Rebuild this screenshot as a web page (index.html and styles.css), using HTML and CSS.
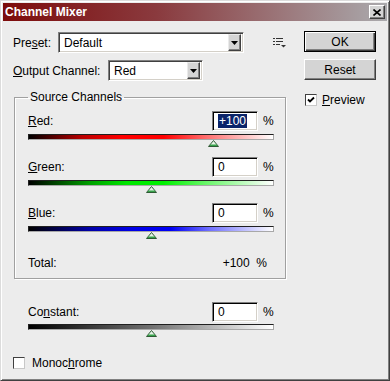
FILE: index.html
```html
<!DOCTYPE html>
<html lang="en">
<head>
  <meta charset="UTF-8" />
  <title>Channel Mixer</title>
  <link rel="stylesheet" href="styles.css">
</head>
<body>

  <div class="window">
    <div class="titlebar">
      <span class="title">Channel Mixer</span>
      <button class="close-btn">
        <svg width="8" height="7" viewBox="0 0 8 7"><path d="M0.5 0.5 L7.5 6.5 M7.5 0.5 L0.5 6.5" stroke="#000" stroke-width="1.6" fill="none"/></svg>
      </button>
    </div>

    <div class="dialog">
      <div class="main">
        <div class="field-row">
          <label class="preset-label">Pre<u>s</u>et:</label>
          <div class="select preset-select">
            <span class="select-text">Default</span>
            <span class="select-arrow"><svg width="7" height="4" viewBox="0 0 7 4"><polygon points="0,0 7,0 3.5,4" fill="#000"/></svg></span>
          </div>
          <!-- preset options menu -->
          <svg class="list-icon" width="14" height="10" viewBox="0 0 14 10">
            <rect x="0" y="0" width="2" height="1" fill="#333"/>
            <rect x="3" y="0" width="7" height="1" fill="#333"/>
            <rect x="0" y="3" width="2" height="1" fill="#333"/>
            <rect x="3" y="3" width="7" height="1" fill="#333"/>
            <rect x="0" y="6" width="2" height="1" fill="#333"/>
            <rect x="3" y="6" width="4" height="1" fill="#333"/>
            <polygon points="8,7 13,7 10.5,9.5" fill="#333"/>
          </svg>
        </div>

        <div class="field-row output-row">
          <label class="output-label"><u>O</u>utput Channel:</label>
          <div class="select output-select">
            <span class="select-text">Red</span>
            <span class="select-arrow"><svg width="7" height="4" viewBox="0 0 7 4"><polygon points="0,0 7,0 3.5,4" fill="#000"/></svg></span>
          </div>
        </div>

        <fieldset class="group">
          <legend>Source Channels</legend>

          <div class="slider">
            <div class="slider-head">
              <label class="slider-label"><u>R</u>ed:</label>
              <div class="num-input"><span class="selected">+100</span></div>
              <span class="pct">%</span>
            </div>
            <div class="track red"></div>
            <div class="thumb-lane">
              <svg class="thumb" style="left:75%" width="11" height="7" viewBox="0 0 11 7"><polygon points="5.5,0.5 10.5,6.5 0.5,6.5" fill="#e6f3e6" stroke="#2e5a34"/><rect x="2" y="4.5" width="7" height="1.5" fill="#36a24a"/></svg>
            </div>
          </div>

          <div class="slider">
            <div class="slider-head">
              <label class="slider-label"><u>G</u>reen:</label>
              <div class="num-input">0</div>
              <span class="pct">%</span>
            </div>
            <div class="track green"></div>
            <div class="thumb-lane">
              <svg class="thumb" style="left:50%" width="11" height="7" viewBox="0 0 11 7"><polygon points="5.5,0.5 10.5,6.5 0.5,6.5" fill="#e6f3e6" stroke="#2e5a34"/><rect x="2" y="4.5" width="7" height="1.5" fill="#36a24a"/></svg>
            </div>
          </div>

          <div class="slider">
            <div class="slider-head">
              <label class="slider-label"><u>B</u>lue:</label>
              <div class="num-input">0</div>
              <span class="pct">%</span>
            </div>
            <div class="track blue"></div>
            <div class="thumb-lane">
              <svg class="thumb" style="left:50%" width="11" height="7" viewBox="0 0 11 7"><polygon points="5.5,0.5 10.5,6.5 0.5,6.5" fill="#e6f3e6" stroke="#2e5a34"/><rect x="2" y="4.5" width="7" height="1.5" fill="#36a24a"/></svg>
            </div>
          </div>

          <div class="total-row">
            <span>Total:</span>
            <span class="total-value">+100&nbsp;&nbsp;%</span>
          </div>
        </fieldset>

        <div class="slider constant">
          <div class="slider-head">
            <label class="slider-label">Co<u>n</u>stant:</label>
            <div class="num-input">0</div>
            <span class="pct">%</span>
          </div>
          <div class="track gray"></div>
          <div class="thumb-lane">
            <svg class="thumb" style="left:50%" width="11" height="7" viewBox="0 0 11 7"><polygon points="5.5,0.5 10.5,6.5 0.5,6.5" fill="#e6f3e6" stroke="#2e5a34"/><rect x="2" y="4.5" width="7" height="1.5" fill="#36a24a"/></svg>
          </div>
        </div>

        <label class="check-row mono">
          <span class="checkbox"></span>
          <span>Monoc<u>h</u>rome</span>
        </label>
      </div>

      <div class="side">
        <button class="btn ok-btn">OK</button>
        <button class="btn reset-btn">Reset</button>
        <label class="check-row preview">
          <span class="checkbox">
            <svg width="8" height="8" viewBox="0 0 8 8"><path d="M1 3.5 L3 5.5 L7 1.5" stroke="#000" stroke-width="1.8" fill="none"/></svg>
          </span>
          <span><u>P</u>review</span>
        </label>
      </div>
    </div>
  </div>

</body>
</html>
```

FILE: styles.css
```css
body {
  margin: 0;
  font-family: "Liberation Sans", Arial, sans-serif;
  font-size: 12px;
  color: #000;
}

.window {
  width: 390px;
  height: 381px;
  box-sizing: border-box;
  border: 1px solid;
  border-color: #dcdcdc #404040 #404040 #dcdcdc;
  padding: 2px;
  box-shadow: inset 1px 1px #fff, inset -1px -1px #808080;
  background: #ececec;
  display: flex;
  flex-direction: column;
}

.titlebar {
  height: 18px;
  flex-shrink: 0;
  display: flex;
  align-items: center;
  justify-content: space-between;
  padding: 0 2px;
  background: linear-gradient(to right, #7d0c0c, #8a3a3e 40%, #aaaaad);
  color: #fff;
  font-weight: bold;
}

.close-btn {
  width: 16px;
  height: 14px;
  padding: 0;
  display: flex;
  align-items: center;
  justify-content: center;
  background: #d4d4d4;
  border: 1px solid;
  border-color: #fff #404040 #404040 #fff;
  box-shadow: inset -1px -1px #808080;
}

.dialog {
  flex: 1;
  display: flex;
  padding-top: 11px;
}

.main {
  width: 287px;
  padding-left: 10px;
  box-sizing: border-box;
}

.side {
  width: 72px;
  margin-left: 14px;
  margin-top: -1px;
  display: flex;
  flex-direction: column;
}

.field-row {
  display: flex;
  align-items: center;
  height: 21px;
}

.output-row {
  margin-top: 7px;
}

.preset-label {
  width: 45px;
}

.output-label {
  width: 95px;
}

.select {
  box-sizing: border-box;
  height: 21px;
  display: flex;
  align-items: center;
  padding: 2px;
  background: #fff;
  border: 1px solid;
  border-color: #808080 #fff #fff #808080;
  box-shadow: inset 1px 1px #404040, inset -1px -1px #d4d0c8;
}

.preset-select {
  width: 186px;
}

.output-select {
  width: 95px;
}

.select-text {
  flex: 1;
  padding-left: 3px;
}

.select-arrow {
  width: 13px;
  height: 17px;
  box-sizing: border-box;
  display: flex;
  align-items: center;
  justify-content: center;
  background: #d4d4d4;
  border: 1px solid;
  border-color: #eaeaea #404040 #404040 #eaeaea;
  box-shadow: inset -1px -1px #808080;
}

.list-icon {
  margin-left: 29px;
}

.group {
  width: 272px;
  box-sizing: border-box;
  margin: 9px 0 0 1px;
  padding: 7px 11px 8px 13px;
  border: 1px solid #a0a0a0;
  box-shadow: 1px 1px #fff, inset 1px 1px #fff;
  min-inline-size: 0;
}

.group legend {
  padding: 0 2px;
  line-height: 14px;
}

.slider-head {
  display: flex;
  align-items: center;
  height: 20px;
}

.slider-label {
  flex: 1;
}

.num-input {
  width: 46px;
  height: 20px;
  box-sizing: border-box;
  padding-left: 5px;
  line-height: 18px;
  background: #fff;
  border: 1px solid;
  border-color: #808080 #fff #fff #808080;
  box-shadow: inset 1px 1px #000, inset -1px -1px #d4d0c8;
}

.selected {
  background: #0a246a;
  color: #fff;
  padding: 0 1px;
}

.pct {
  width: 16px;
  padding-left: 5px;
  box-sizing: border-box;
}

.track {
  height: 6px;
  margin-top: 3px;
  box-sizing: border-box;
  border: 1px solid;
  border-color: #202020 #a8a8a8 #a8a8a8 #202020;
}

.track.red {
  background: linear-gradient(to right, #000, #b00 22%, #f00 38%, #f00 55%, #ff6a6a 72%, #fff);
}

.track.green {
  background: linear-gradient(to right, #000, #00a000 25%, #00e600 40%, #00f000 55%, #66f566 72%, #fff);
}

.track.blue {
  background: linear-gradient(to right, #000, #0000a8 25%, #0000e6 42%, #0000f5 58%, #7070ff 74%, #fff);
}

.track.gray {
  background: linear-gradient(to right, #000, #707070 50%, #fff);
}

.thumb-lane {
  position: relative;
  height: 7px;
  margin-bottom: 10px;
}

.thumb {
  position: absolute;
  top: 0;
  margin-left: -5px;
  display: block;
}

.total-row {
  display: flex;
  justify-content: space-between;
  align-items: center;
  height: 14px;
  margin-top: 17px;
}

.total-value {
  margin-right: 7px;
}

.constant {
  width: 246px;
  margin: 23px 0 0 15px;
}

.constant .track {
  margin-top: 2px;
}

.check-row {
  display: flex;
  align-items: center;
  height: 14px;
}

.checkbox {
  width: 12px;
  height: 12px;
  box-sizing: border-box;
  display: flex;
  align-items: center;
  justify-content: center;
  background: #fff;
  border: 1px solid;
  border-color: #404040 #c8c8c8 #c8c8c8 #404040;
  margin-right: 7px;
}

.mono {
  margin-top: 19px;
}

.preview {
  margin-top: 13px;
  margin-left: 1px;
}

.preview .checkbox {
  margin-right: 5px;
}

.btn {
  width: 72px;
  height: 21px;
  padding: 0;
  font: inherit;
  color: #000;
  background: #d4d4d4;
  border: 1px solid;
  border-color: #fff #404040 #404040 #fff;
  box-shadow: inset -1px -1px #808080;
}

.ok-btn {
  border-color: #000;
  box-shadow: inset 1px 1px #fff, inset -1px -1px #404040, inset -2px -2px #808080;
}

.reset-btn {
  margin-top: 7px;
}
```
